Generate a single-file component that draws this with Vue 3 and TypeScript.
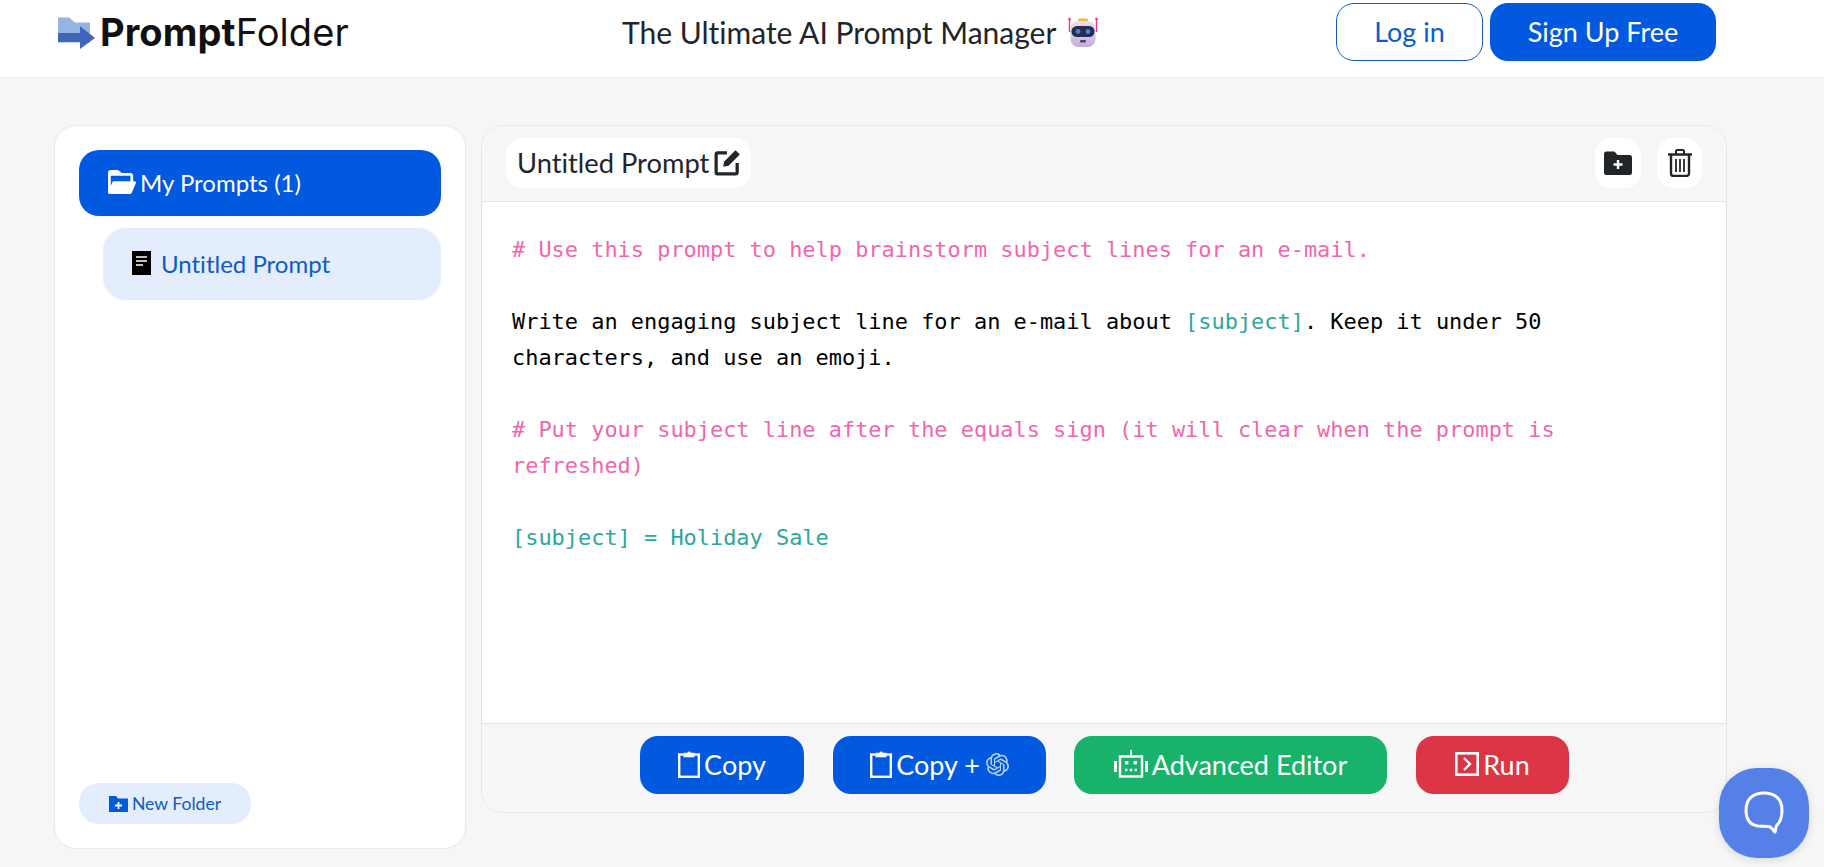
<template>
	<div class="page">
		<header class="topbar">
			<a class="logo">
				<svg class="logo-mark" viewBox="0 0 37 34" width="37" height="34">
					<path d="M0 2.5h11l6 5h15v20H0z" fill="#94b4e3" />
					<path d="M0 18h22v-7l15 12-15 11v-7H0z" fill="#3f66b8" />
				</svg>
				<span class="logo-text"><b>Prompt</b>Folder</span>
			</a>
			<div class="tagline">
				The Ultimate AI Prompt Manager
				<svg class="robot-emoji" viewBox="0 0 30 30" width="30" height="30">
					<defs>
						<linearGradient id="head" x1="0" y1="0" x2="0" y2="1">
							<stop offset="0" stop-color="#e8e2ee" />
							<stop offset="1" stop-color="#c3aee0" />
						</linearGradient>
					</defs>
					<path d="M1.5 1v14M28.5 1v14" stroke="#ec3f7d" stroke-width="1.4" />
					<circle cx="1.5" cy="2" r="1.3" fill="#ec3f7d" />
					<circle cx="28.5" cy="2" r="1.3" fill="#ec3f7d" />
					<rect x="10" y="1.5" width="10" height="4" rx="1.5" fill="#f2bb3d" />
					<rect x="2.5" y="4" width="25" height="26" rx="8" fill="url(#head)" />
					<rect x="3.5" y="9" width="23" height="11" rx="5.5" fill="#2c2a4e" />
					<circle cx="10" cy="14.5" r="2.4" fill="#2b8fe0" />
					<circle cx="20" cy="14.5" r="2.4" fill="#2b8fe0" />
					<rect x="12" y="23" width="6" height="2.6" rx="1.3" fill="#4a4468" />
				</svg>
			</div>
			<nav class="auth">
				<button class="auth-btn login">Log in</button>
				<button class="auth-btn signup">Sign Up Free</button>
			</nav>
		</header>

		<main class="workspace">
			<aside class="sidebar">
				<div class="folder-list">
					<div class="folder">
						<svg viewBox="2 3 20 17" width="28" height="24" fill="#fff">
							<path d="M2.165 19.551c.186.28.499.449.835.449h15c.4 0 .762-.238.919-.606l3-7A.998.998 0 0 0 21 11h-1V7c0-1.103-.897-2-2-2h-6.1L9.616 3.213A.997.997 0 0 0 9 3H4c-1.103 0-2 .897-2 2v14h.007a1 1 0 0 0 .158.551zM18 7v4H6c-.4 0-.762.238-.919.606L4 14.129V7h14z" />
						</svg>
						<span>My Prompts (1)</span>
					</div>
					<div class="prompt-item">
						<svg viewBox="0 0 19 24" width="19" height="24">
							<rect width="19" height="24" fill="#000" />
							<path d="M4 6h11M4 10h11M4 14h7" stroke="#fff" stroke-width="1.6" />
						</svg>
						<span>Untitled Prompt</span>
					</div>
				</div>
				<button class="new-folder">
					<svg viewBox="0 0 19 16" width="19" height="16">
						<path d="M0 0h7l2 2.5h10V16H0z" fill="#0059de" />
						<path d="M9.500 6v7M6 9.500h7" stroke="#fff" stroke-width="1.8" />
					</svg>
					New Folder
				</button>
			</aside>

			<section class="editor">
				<div class="editor-head">
					<div class="title-pill">
						<span>Untitled Prompt</span>
						<svg viewBox="0 0 26 26" width="28" height="28" fill="none">
							<path d="M12 4.500H3.500a1.500 1.500 0 0 0-1.500 1.500v16.500a1.500 1.500 0 0 0 1.500 1.500h16.500a1.500 1.500 0 0 0 1.500-1.500V14" stroke="#212529" stroke-width="3" />
							<path d="M8.500 17.500l1-5L20 2l4 4-10.500 10.500z" fill="#212529" />
						</svg>
					</div>
					<div class="head-actions">
						<button class="icon-btn wide">
							<svg viewBox="0 0 28 24" width="28" height="24">
								<path d="M0 3a2.500 2.500 0 0 1 2.500-2.500h8l3 3.500h12A2.500 2.500 0 0 1 28 6.500v15a2.500 2.500 0 0 1-2.500 2.500h-23A2.500 2.500 0 0 1 0 21.500z" fill="#212529" />
								<path d="M14 9v9M9.500 13.500h9" stroke="#fff" stroke-width="2.400" />
							</svg>
						</button>
						<button class="icon-btn">
							<svg viewBox="0 0 24 28" width="24" height="28" fill="none" stroke="#212529">
								<path d="M0 5.500h24" stroke-width="2.400" />
								<path d="M8 5V2.500A1.500 1.500 0 0 1 9.500 1h5A1.500 1.500 0 0 1 16 2.500V5" stroke-width="2" />
								<path d="M3 6v18.500A2.500 2.500 0 0 0 5.500 27h13a2.500 2.500 0 0 0 2.500-2.500V6" stroke-width="2.400" />
								<path d="M8 10v13M12 10v13M16 10v13" stroke-width="1.800" />
							</svg>
						</button>
					</div>
				</div>

				<div class="editor-body">
					<p v-for="(line, i) in lines" :key="i" :class="line.kind">
						<template v-for="(part, j) in line.parts" :key="j">
							<span v-if="part.variable" class="variable">{{ part.text }}</span>
							<template v-else>{{ part.text }}</template>
						</template>
					</p>
				</div>

				<div class="editor-foot">
					<button class="action blue copy">
						<svg viewBox="0 0 22 28" width="22" height="28" fill="none" stroke="#fff">
							<rect x="1.200" y="4.500" width="19.600" height="22.300" stroke-width="2.400" />
							<path d="M5.500 2.800h3.800a1.800 1.800 0 0 1 3.400 0h3.800v4.400h-11z" fill="#fff" stroke="none" />
						</svg>
						Copy
					</button>
					<button class="action blue copy-gpt">
						<svg viewBox="0 0 22 28" width="22" height="28" fill="none" stroke="#fff">
							<rect x="1.200" y="4.500" width="19.600" height="22.300" stroke-width="2.400" />
							<path d="M5.500 2.800h3.800a1.800 1.800 0 0 1 3.400 0h3.800v4.400h-11z" fill="#fff" stroke="none" />
						</svg>
						Copy +
						<svg class="gpt" viewBox="0 0 24 24" width="23" height="23" fill="#bcd2f7">
							<path d="M22.2819 9.8211a5.9847 5.9847 0 0 0-.5157-4.9108 6.0462 6.0462 0 0 0-6.5098-2.9A6.0651 6.0651 0 0 0 4.9807 4.1818a5.9847 5.9847 0 0 0-3.9977 2.9 6.0462 6.0462 0 0 0 .7427 7.0966 5.98 5.98 0 0 0 .511 4.9107 6.051 6.051 0 0 0 6.5146 2.9001A5.9847 5.9847 0 0 0 13.2599 24a6.0557 6.0557 0 0 0 5.7718-4.2058 5.9894 5.9894 0 0 0 3.9977-2.9001 6.0557 6.0557 0 0 0-.7475-7.0729zm-9.022 12.6081a4.4755 4.4755 0 0 1-2.8764-1.0408l.1419-.0804 4.7783-2.7582a.7948.7948 0 0 0 .3927-.6813v-6.7369l2.02 1.1686a.071.071 0 0 1 .038.052v5.5826a4.504 4.504 0 0 1-4.4945 4.4944zm-9.6607-4.1254a4.4708 4.4708 0 0 1-.5346-3.0137l.142.0852 4.783 2.7582a.7712.7712 0 0 0 .7806 0l5.8428-3.3685v2.3324a.0804.0804 0 0 1-.0332.0615L9.74 19.9502a4.4992 4.4992 0 0 1-6.1408-1.6464zM2.3408 7.8956a4.485 4.485 0 0 1 2.3655-1.9728V11.6a.7664.7664 0 0 0 .3879.6765l5.8144 3.3543-2.0201 1.1685a.0757.0757 0 0 1-.071 0l-4.8303-2.7865A4.504 4.504 0 0 1 2.3408 7.872zm16.5963 3.8558L13.1038 8.364 15.1192 7.2a.0757.0757 0 0 1 .071 0l4.8303 2.7913a4.4944 4.4944 0 0 1-.6765 8.1042v-5.6772a.79.79 0 0 0-.407-.667zm2.0107-3.0231l-.142-.0852-4.7735-2.7818a.7759.7759 0 0 0-.7854 0L9.409 9.2297V6.8974a.0662.0662 0 0 1 .0284-.0615l4.8303-2.7866a4.4992 4.4992 0 0 1 6.6802 4.66zM8.3065 12.863l-2.02-1.1638a.0804.0804 0 0 1-.038-.0567V6.0742a4.4992 4.4992 0 0 1 7.3757-3.4537l-.142.0805L8.704 5.459a.7948.7948 0 0 0-.3927.6813zm1.0976-2.3654l2.602-1.4998 2.6069 1.4998v2.9994l-2.5974 1.4997-2.6067-1.4997Z" />
						</svg>
					</button>
					<button class="action green advanced">
						<svg viewBox="0 0 34 28" width="34" height="28" fill="none" stroke="#fff">
							<rect x="6" y="6.500" width="22" height="20" stroke-width="2.400" />
							<path d="M17 0v6" stroke-width="2" />
							<path d="M1.500 11v11M32.500 11v11" stroke-width="3" />
							<rect x="11" y="11" width="3.400" height="3.400" fill="#fff" stroke="none" />
							<rect x="19.600" y="11" width="3.400" height="3.400" fill="#fff" stroke="none" />
							<path d="M11 20h12" stroke-width="2.400" stroke-dasharray="2.400 2.400" />
						</svg>
						Advanced Editor
					</button>
					<button class="action red run">
						<svg viewBox="0 0 24 24" width="24" height="24" fill="none" stroke="#fff">
							<rect x="1.300" y="1.300" width="21.400" height="21.400" stroke-width="2.600" />
							<path d="M9 6l6 6-6 6" stroke-width="2.400" />
						</svg>
						Run
					</button>
				</div>
			</section>
		</main>

		<button class="chat-bubble" aria-label="Chat">
			<svg viewBox="0 0 40 44" width="40" height="44" fill="none">
				<path d="M20 2C9 2 2 8 2 19c0 9 4 15 12 16l11 .5c2 .5 3.500 2.500 6 5.500 1-3 .5-5 2-7 3.500-3 5-8 5-15C38 8 31 2 20 2z" stroke="#fff" stroke-width="3" stroke-linejoin="round" />
			</svg>
		</button>
	</div>
</template>

<script setup lang="ts">
type Part = { text: string; variable?: boolean }
type Line = { kind: string; parts: Part[] }

const lines: Line[] = [
	{ kind: 'comment', parts: [{ text: '# Use this prompt to help brainstorm subject lines for an e-mail.' }] },
	{ kind: 'blank', parts: [{ text: ' ' }] },
	{
		kind: 'plain',
		parts: [
			{ text: 'Write an engaging subject line for an e-mail about ' },
			{ text: '[subject]', variable: true },
			{ text: '. Keep it under 50 characters, and use an emoji.' },
		],
	},
	{ kind: 'blank', parts: [{ text: ' ' }] },
	{ kind: 'comment', parts: [{ text: '# Put your subject line after the equals sign (it will clear when the prompt is refreshed)' }] },
	{ kind: 'blank', parts: [{ text: ' ' }] },
	{ kind: 'variable', parts: [{ text: '[subject] = Holiday Sale' }] },
]
</script>

<style>
html, body { margin: 0; background: #f6f6f6; overflow: hidden; }
</style>

<style scoped>
.page { height: 867px; font-family: Lato, "Open Sans", sans-serif; font-variant-ligatures: none; color: #212529; background: #f6f6f6; }
button { font-family: inherit; font-variant-ligatures: none; cursor: pointer; }

.topbar { height: 78px; box-sizing: border-box; display: flex; align-items: flex-start; padding-left: 58px; background: #fff; border-bottom: 1px solid #f0f0f0; }
.logo { display: flex; align-items: center; gap: 5px; height: 64px; width: 420px; margin-right: 144px; flex: none; }
.logo-text { font-family: Inter, sans-serif; font-size: 38px; letter-spacing: 0.1px; color: #111; }
.logo-text b { font-weight: 700; }
.tagline { display: flex; align-items: center; gap: 12px; height: 64px; font-size: 30px; color: #212529; white-space: nowrap; }
.auth { display: flex; gap: 7px; margin-left: auto; margin-right: 108px; padding-top: 3px; }
.auth-btn { height: 58px; padding: 0 0 2px; border-radius: 18px; font-size: 27px; box-sizing: border-box; }
.login { width: 147px; background: #fff; border: 1px solid #0b5cbe; color: #0b5cc8; }
.signup { width: 226px; background: #0059de; border: 0; color: #fff; }

.workspace { display: flex; align-items: flex-start; gap: 15px; padding: 47px 0 0 54px; }

.sidebar { width: 412px; height: 724px; box-sizing: border-box; padding: 24px; display: flex; flex-direction: column; justify-content: space-between; background: #fff; border: 1px solid #e8e8e8; border-radius: 22px; }
.folder-list { display: flex; flex-direction: column; gap: 12px; }
.folder { height: 66px; box-sizing: border-box; padding: 0 0 2px 29px; display: flex; align-items: center; gap: 4px; background: #0059de; color: #fff; font-size: 24px; border-radius: 20px; }
.prompt-item { height: 72px; box-sizing: border-box; margin-left: 24px; padding: 0 0 2px 29px; display: flex; align-items: center; gap: 10px; background: #e3edfc; color: #0b5cc8; font-size: 24px; border-radius: 22px; }
.new-folder { align-self: flex-start; width: 172px; height: 41px; padding: 0; display: flex; align-items: center; justify-content: center; gap: 4px; background: #e3edfc; border: 0; border-radius: 20px; color: #0b5cc8; font-size: 17.6px; }

.editor { width: 1246px; height: 688px; box-sizing: border-box; display: flex; flex-direction: column; background: #fff; border: 1px solid #e6e6e6; border-radius: 22px; overflow: hidden; }
.editor-head { height: 76px; box-sizing: border-box; flex: none; display: flex; align-items: center; justify-content: space-between; padding: 0 24px 1px 24px; background: #f6f6f6; border-bottom: 1px solid #e6e6e6; }
.title-pill { height: 50px; box-sizing: border-box; padding: 0 9px 2px 11px; display: flex; align-items: center; gap: 5px; background: #fff; border-radius: 16px; font-size: 27.3px; }
.head-actions { display: flex; gap: 16px; }
.icon-btn { width: 45px; height: 50px; padding: 0; display: flex; align-items: center; justify-content: center; background: #fff; border: 0; border-radius: 16px; }
.icon-btn.wide { width: 46px; }

.editor-body { flex: 1; padding: 30px 30px 0 30px; font-family: "DejaVu Sans Mono", monospace; font-size: 21.93px; line-height: 36px; color: #000; }
.editor-body p { margin: 0; white-space: pre-wrap; }
.comment { color: #f266ab; }
.variable { color: #2aa89c; }

.editor-foot { height: 89px; box-sizing: border-box; flex: none; display: flex; justify-content: center; align-items: flex-start; gap: 29px; padding: 12px 0 0 1px; background: #f7f7f7; border-top: 1px solid #e6e6e6; }
.action { height: 58px; padding: 0 0 2px; display: flex; align-items: center; justify-content: center; gap: 4px; border: 0; border-radius: 18px; color: #fff; font-size: 27px; white-space: nowrap; }
.blue { background: #0059de; }
.green { background: #19b26b; }
.red { background: #dc3545; }
.copy { width: 164px; }
.copy-gpt { width: 213px; margin-right: -1px; }
.advanced { width: 313px; }
.run { width: 153px; }
.gpt { margin-left: 2px; }

.chat-bubble { position: fixed; left: 1719px; top: 768px; width: 90px; height: 90px; padding: 0; display: flex; align-items: center; justify-content: center; background: #5580e8; border: 0; border-radius: 42%; box-shadow: 0 2px 8px rgba(0, 0, 0, .12); }
</style>
